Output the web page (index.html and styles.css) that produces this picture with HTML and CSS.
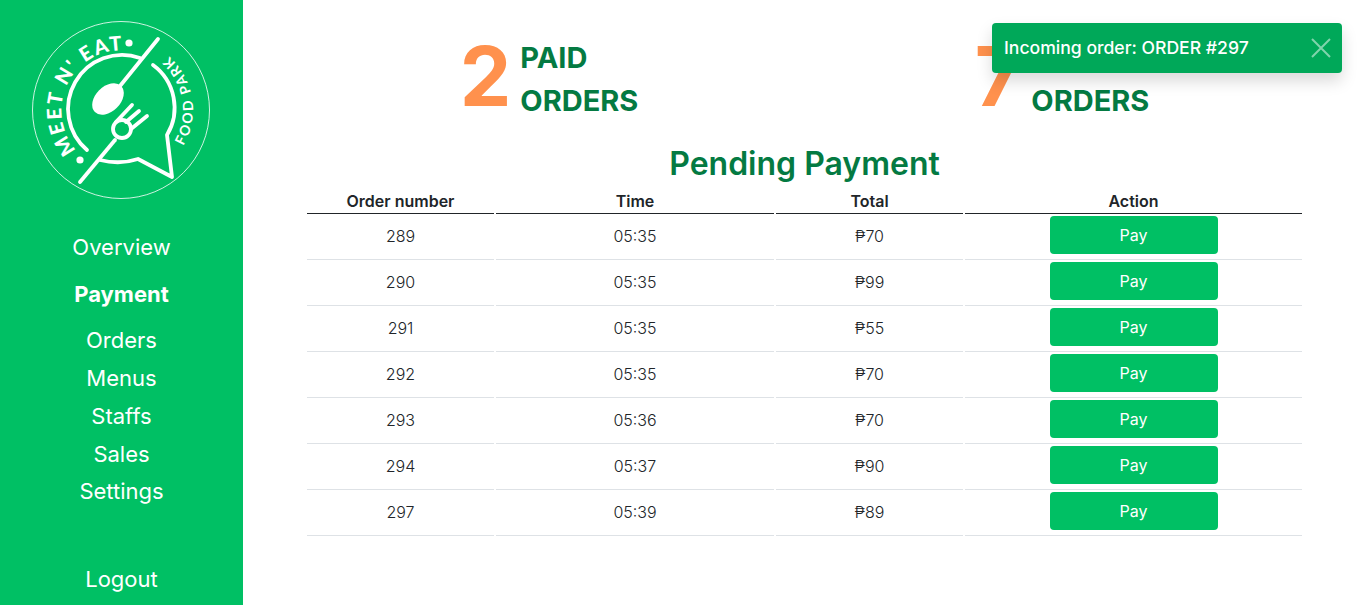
FILE: index.html
```html
<!DOCTYPE html>
<html>

<head>
	<meta charset="utf-8">
	<title>Payment</title>
	<link rel="stylesheet" href="styles.css">
</head>

<body>
	<div class="app">
		<div class="sidebar">
			<svg class="logo" viewBox="0 0 200 200">
				<defs>
					<path id="arcLeft" d="M56.4 140 A60 60 0 0 1 110 41" />
					<path id="arcRight" d="M163.3 136 A72 72 0 0 0 147.3 44.8" />
				</defs>
				<circle class="line-thin" cx="101" cy="100" r="88.5" />
				<text class="logo-big"><textPath href="#arcLeft" textLength="138" lengthAdjust="spacing">MEET N' EAT</textPath></text>
				<text class="logo-small"><textPath href="#arcRight" textLength="98" lengthAdjust="spacing">FOOD PARK</textPath></text>
				<circle class="fill" cx="60" cy="150" r="3.6" />
				<circle class="fill" cx="109" cy="33" r="3.6" />
				<path class="line" d="M120 48 A54 54 0 0 0 67 140" />
				<path class="line" d="M80 150 Q100 155 118 149 L152 167 L147 125 A53 53 0 0 0 133 55" />
				<path class="line" d="M138 29 L100 76" />
				<ellipse class="fill" cx="88" cy="89" rx="18.5" ry="12.5" transform="rotate(-45 88 89)" />
				<path class="line" d="M60 172 L95 130" />
				<circle class="line" cx="102" cy="119" r="9" />
				<path class="line" d="M96 112 L112 95" />
				<path class="line" d="M106 112 L119 101" />
				<path class="line" d="M111 119 L127 106" />
			</svg>
			<ul class="nav">
				<li><a href="#">Overview</a></li>
				<li class="current"><a href="#">Payment</a></li>
				<li><a href="#">Orders</a></li>
				<li><a href="#">Menus</a></li>
				<li><a href="#">Staffs</a></li>
				<li><a href="#">Sales</a></li>
				<li><a href="#">Settings</a></li>
			</ul>
			<a class="logout" href="#">Logout</a>
		</div>

		<div class="main">
			<div class="stats">
				<div class="stat">
					<span class="num">2</span>
					<span class="label">PAID<br>ORDERS</span>
				</div>
				<div class="stat">
					<span class="num">7</span>
					<span class="label">UNPAID<br>ORDERS</span>
				</div>
			</div>

			<h1>Pending Payment</h1>

			<table>
				<thead>
					<tr>
						<th class="c1">Order number</th>
						<th class="c2">Time</th>
						<th class="c3">Total</th>
						<th>Action</th>
					</tr>
				</thead>
				<tbody>
					<tr><td>289</td><td>05:35</td><td>₱70</td><td><a class="pay" href="#">Pay</a></td></tr>
					<tr><td>290</td><td>05:35</td><td>₱99</td><td><a class="pay" href="#">Pay</a></td></tr>
					<tr><td>291</td><td>05:35</td><td>₱55</td><td><a class="pay" href="#">Pay</a></td></tr>
					<tr><td>292</td><td>05:35</td><td>₱70</td><td><a class="pay" href="#">Pay</a></td></tr>
					<tr><td>293</td><td>05:36</td><td>₱70</td><td><a class="pay" href="#">Pay</a></td></tr>
					<tr><td>294</td><td>05:37</td><td>₱90</td><td><a class="pay" href="#">Pay</a></td></tr>
					<tr><td>297</td><td>05:39</td><td>₱89</td><td><a class="pay" href="#">Pay</a></td></tr>
				</tbody>
			</table>
		</div>
	</div>

	<div class="toast">
		<span class="toast-text">Incoming order: ORDER #297</span>
		<svg class="close" viewBox="0 0 20 20">
			<path d="M1 1 L19 19 M19 1 L1 19" />
		</svg>
	</div>
</body>

</html>
```

FILE: styles.css
```css
* {
	margin: 0;
	padding: 0;
	box-sizing: border-box;
}

ul {
	list-style: none;
}

a {
	color: inherit;
	text-decoration: none;
}

body {
	font-family: Inter, "Noto Sans", sans-serif;
	color: #212529;
	background: #fff;
}

.app {
	display: flex;
	height: 605px;
	overflow: hidden;
}

/* sidebar */
.sidebar {
	width: 243px;
	flex: none;
	background: #00c064;
	color: #fff;
	display: flex;
	flex-direction: column;
	align-items: center;
	padding: 10px 0 7px;
}

.logo {
	width: 200px;
	height: 200px;
	flex: none;
	margin-right: 3px;
}

.logo .line {
	fill: none;
	stroke: #fff;
	stroke-width: 3.8;
	stroke-linecap: round;
	stroke-linejoin: round;
}

.logo .line-thin {
	fill: none;
	stroke: #fff;
	stroke-width: 1;
	opacity: .8;
}

.logo .fill {
	fill: #fff;
}

.logo-big {
	fill: #fff;
	font-family: Lato, Inter, sans-serif;
	font-size: 20px;
	font-weight: 900;
}

.logo-small {
	fill: #fff;
	font-family: Lato, Inter, sans-serif;
	font-size: 14px;
	font-weight: 700;
}

.nav {
	margin-top: 19px;
	width: 100%;
	text-align: center;
	font-size: 22px;
	line-height: 37.9px;
}

.nav .current {
	font-weight: 700;
	margin: 9px 0 8px;
}

.logout {
	margin-top: auto;
	font-size: 22px;
	line-height: 38px;
}

/* main */
.main {
	flex: 1;
	padding-top: 23px;
	display: flex;
	flex-direction: column;
	align-items: center;
}

.stats {
	display: grid;
	grid-template-columns: 511px 511px;
	height: 108px;
}

.stat {
	display: flex;
	justify-content: center;
	align-items: center;
}

.stat + .stat {
	padding-left: 4px;
}

.num {
	font-size: 82px;
	font-weight: 700;
	line-height: 108px;
	color: #ff914d;
	margin-right: 9px;
}

.label {
	font-size: 29px;
	font-weight: 700;
	line-height: 43px;
	color: #047a42;
	margin-top: 4px;
}

h1 {
	font-size: 32px;
	font-weight: 600;
	line-height: 47px;
	color: #047a42;
	margin-top: 9px;
}

table {
	width: 999px;
	table-layout: fixed;
	border-collapse: separate;
	border-spacing: 2px;
	margin-top: 2px;
	text-align: center;
	font-size: 16px;
}

th {
	font-size: 16px;
	font-weight: 600;
	line-height: 20px;
	height: 23px;
	padding-bottom: 2px;
	border-bottom: 1px solid #212529;
}

th.c1 {
	width: 187px;
}

th.c2 {
	width: 278px;
}

th.c3 {
	width: 187px;
}

td {
	height: 44px;
	padding-bottom: 4px;
	font-weight: 300;
	border-bottom: 1px solid #dee2e6;
	vertical-align: middle;
}

td:last-child {
	padding-bottom: 2px;
}

.pay {
	display: block;
	width: 168px;
	height: 38px;
	line-height: 38px;
	margin: 0 auto 3px;
	border-radius: 4px;
	background: #00c064;
	color: #fff;
	font-weight: 400;
}

/* toast */
.toast {
	position: absolute;
	left: 992px;
	top: 23px;
	width: 350px;
	height: 50px;
	padding: 0 12px;
	display: flex;
	justify-content: space-between;
	align-items: center;
	border-radius: 4px;
	background: #00a859;
	color: #fff;
	box-shadow: 0 8px 16px rgba(0, 0, 0, .15);
}

.toast-text {
	font-size: 17.6px;
	font-weight: 500;
	padding-bottom: 2px;
}

.close {
	width: 20px;
	height: 20px;
	margin-right: -1px;
}

.close path {
	fill: none;
	stroke: #fff;
	stroke-width: 2;
	opacity: .5;
}
```
